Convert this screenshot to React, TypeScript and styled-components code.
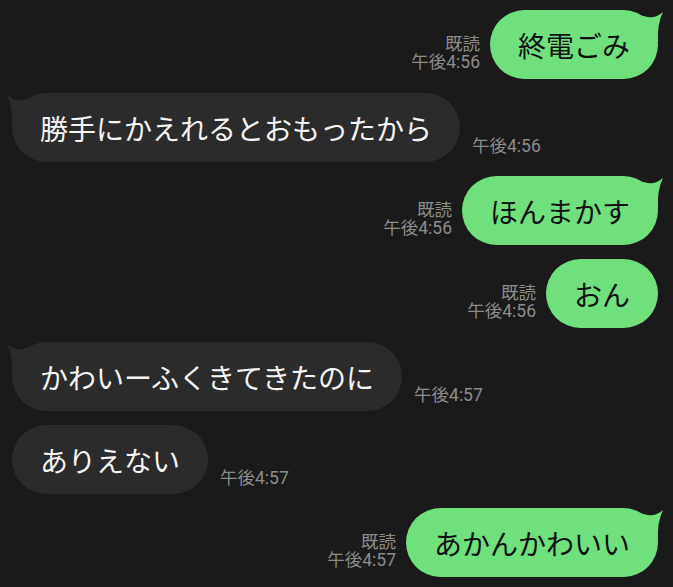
import React from "react";
import styled, { createGlobalStyle } from "styled-components";

type Msg = {
  text: string;
  time: string;
  mine: boolean;
  tail: boolean;
};

const messages: Msg[] = [
  { text: "終電ごみ", time: "午後4:56", mine: true, tail: true },
  { text: "勝手にかえれるとおもったから", time: "午後4:56", mine: false, tail: true },
  { text: "ほんまかす", time: "午後4:56", mine: true, tail: true },
  { text: "おん", time: "午後4:56", mine: true, tail: false },
  { text: "かわいーふくきてきたのに", time: "午後4:57", mine: false, tail: true },
  { text: "ありえない", time: "午後4:57", mine: false, tail: false },
  { text: "あかんかわいい", time: "午後4:57", mine: true, tail: true },
];

const GREEN = "#6fe07b";
const DARK = "#2b2b2b";

const GlobalStyle = createGlobalStyle`
  html, body {
    margin: 0;
    padding: 0;
    background: #1a1a1a;
  }
  body {
    font-family: "Noto Sans CJK JP", "Noto Sans", sans-serif;
  }
`;

const Chat = styled.div`
  display: flex;
  flex-direction: column;
  gap: 14px;
  padding: 10px 15px 0 12px;
  width: 673px;
  height: 587px;
  box-sizing: border-box;
  overflow: hidden;
  background: #1a1a1a;
`;

// received rows are reversed so the bubble sits first, on the left
const Row = styled.div<{ $mine: boolean }>`
  display: flex;
  align-items: flex-end;
  justify-content: flex-end;
  flex-direction: ${(p) => (p.$mine ? "row" : "row-reverse")};
`;

const Meta = styled.div<{ $mine: boolean }>`
  margin: ${(p) => (p.$mine ? "0 10px 8px 0" : "0 0 7px 12px")};
  text-align: ${(p) => (p.$mine ? "right" : "left")};
  font-family: Roboto, "Noto Sans CJK JP", sans-serif;
  font-size: 17.5px;
  line-height: 18px;
  color: #8c8c8c;
  white-space: nowrap;
`;

const Bubble = styled.div<{ $mine: boolean }>`
  position: relative;
  display: flex;
  align-items: center;
  height: 69px;
  padding: 0 28px;
  border-radius: 35px;
  background: ${(p) => (p.$mine ? GREEN : DARK)};
  color: ${(p) => (p.$mine ? "#111" : "#f4f4f4")};
  font-size: 28px;
  line-height: 40px;
  white-space: nowrap;
`;

const Tail = styled.svg<{ $mine: boolean }>`
  position: absolute;
  top: -2px;
  width: 35px;
  height: 36px;
  ${(p) =>
    p.$mine
      ? "left: calc(100% - 28px);"
      : "right: calc(100% - 28px); transform: scaleX(-1);"}
`;

const BubbleTail = ({ mine }: { mine: boolean }) => (
  <Tail $mine={mine} viewBox="0 0 35 36">
    <path
      d="M0 10 L14 8 Q24 12 33 4 Q27 16 28 34 L0 34 Z"
      fill={mine ? GREEN : DARK}
    />
  </Tail>
);

export default function App() {
  return (
    <>
      <GlobalStyle />
      <Chat>
        {messages.map((m, i) => (
          <Row key={i} $mine={m.mine}>
            <Meta $mine={m.mine}>
              {m.mine ? (
                <>
                  既読
                  <br />
                  {m.time}
                </>
              ) : (
                m.time
              )}
            </Meta>
            <Bubble $mine={m.mine}>
              {m.tail && <BubbleTail mine={m.mine} />}
              {m.text}
            </Bubble>
          </Row>
        ))}
      </Chat>
    </>
  );
}
